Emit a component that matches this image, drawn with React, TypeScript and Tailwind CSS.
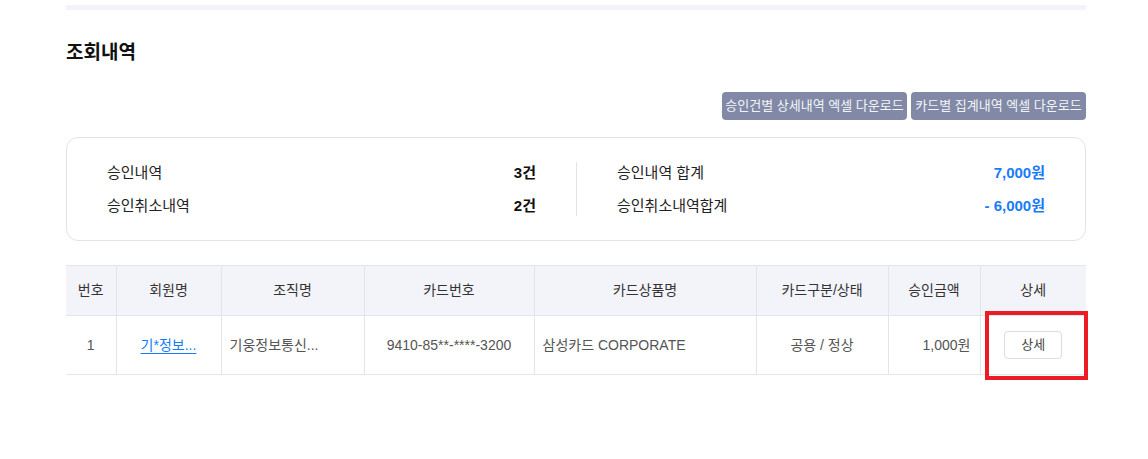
import React from "react";

const font = { fontFamily: '"Liberation Sans", "Noto Sans CJK KR", sans-serif' };

export default function App() {
  const cols = [50, 105, 143, 170, 222, 132, 92, 106];
  const headers = ["번호", "회원명", "조직명", "카드번호", "카드상품명", "카드구분/상태", "승인금액", "상세"];
  return (
    <div className="w-[1148px] h-[459px] bg-white" style={font}>
      <div className="ml-[66px] w-[1020px] pt-[5px]">
        <div className="h-[5px] bg-[#f3f4fa]" />
        <h2 className="mt-[29px] text-[19px] leading-[28px] font-bold text-[#111]">조회내역</h2>
        <div className="mt-[25px] flex justify-end gap-[4px]">
          <button className="h-[28px] w-[185px] rounded-[4px] bg-[#8189a7] text-[13px] text-[#f4f5f8]">
            승인건별 상세내역 엑셀 다운로드
          </button>
          <button className="h-[28px] w-[175px] rounded-[4px] bg-[#8189a7] text-[13px] text-[#f4f5f8]">
            카드별 집계내역 엑셀 다운로드
          </button>
        </div>
        <div className="mt-[17px] h-[104px] rounded-[12px] border border-[#e2e3e8] grid grid-cols-2 items-center">
          <div className="px-[40px] flex flex-col gap-[12px] text-[15px] leading-[21px] text-[#222]">
            <div className="flex justify-between">
              <span>승인내역</span>
              <span className="font-bold text-[#111]">3건</span>
            </div>
            <div className="flex justify-between">
              <span>승인취소내역</span>
              <span className="font-bold text-[#111]">2건</span>
            </div>
          </div>
          <div className="border-l border-[#e2e3e8] px-[40px] flex flex-col gap-[12px] text-[15px] leading-[21px] text-[#222]">
            <div className="flex justify-between">
              <span>승인내역 합계</span>
              <span className="font-bold text-[#1a7cf5]">7,000원</span>
            </div>
            <div className="flex justify-between">
              <span>승인취소내역합계</span>
              <span className="font-bold text-[#1a7cf5]">- 6,000원</span>
            </div>
          </div>
        </div>
        <div className="relative mt-[24px]">
          <table className="w-[1020px] table-fixed border-collapse">
            <colgroup>
              {cols.map((w, i) => (
                <col key={i} style={{ width: w }} />
              ))}
            </colgroup>
            <thead>
              <tr className="h-[50px] bg-[#f3f4fa] border-y border-[#e3e5ec]">
                {headers.map((h, i) => (
                  <th
                    key={i}
                    className={`text-[14px] font-normal text-[#333] text-center ${i > 0 ? "border-l border-[#e3e5ec]" : ""}`}
                  >
                    {h}
                  </th>
                ))}
              </tr>
            </thead>
            <tbody>
              <tr className="h-[59px] border-b border-[#e3e5ec] text-[14px] text-[#555]">
                <td className="text-center">1</td>
                <td className="border-l border-[#e3e5ec] text-center">
                  <span className="text-[#1a7cf5] underline underline-offset-[3px]">기*정보...</span>
                </td>
                <td className="border-l border-[#e3e5ec] pl-[8px]">기웅정보통신...</td>
                <td className="border-l border-[#e3e5ec] text-center">9410-85**-****-3200</td>
                <td className="border-l border-[#e3e5ec] pl-[8px]">삼성카드 CORPORATE</td>
                <td className="border-l border-[#e3e5ec] text-center">공용 / 정상</td>
                <td className="border-l border-[#e3e5ec] text-right pr-[9px]">1,000원</td>
                <td className="border-l border-[#e3e5ec] text-center">
                  <button className="h-[28px] w-[58px] rounded-[4px] border border-[#dcdde3] bg-white text-[13px] text-[#444]">
                    상세
                  </button>
                </td>
              </tr>
            </tbody>
          </table>
          <div className="absolute left-[919px] top-[46px] w-[103px] h-[69px] border-[4px] border-[#ec1c24] pointer-events-none" />
        </div>
      </div>
    </div>
  );
}
